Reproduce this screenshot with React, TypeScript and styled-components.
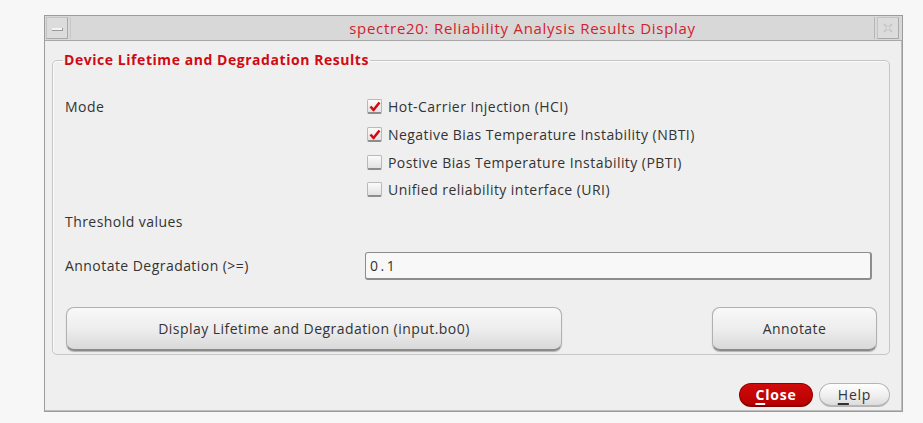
import React from "react";
import styled, { createGlobalStyle, css } from "styled-components";

const Global = createGlobalStyle`
  html, body { margin: 0; padding: 0; background: #f7f7f7; }
  body { font-family: "Open Sans", "DejaVu Sans", sans-serif; color: #333; }
  * { box-sizing: border-box; }
`;

const uiText = css`
  font-family: "Open Sans", "DejaVu Sans", sans-serif;
  font-size: 14px;
  letter-spacing: 0.45px;
  color: #333;
`;

const Page = styled.div`
  padding: 15px 0 0 44px;
  width: 923px;
  height: 423px;
`;

const Window = styled.div`
  width: 859px;
  height: 397px;
  border: 1px solid #9c9c9c;
  box-shadow: inset -1px -1px 0 #bdbdbd;
  background: #efefef;
  display: flex;
  flex-direction: column;
`;

const TitleBar = styled.div`
  height: 25px;
  display: flex;
  align-items: stretch;
  background: #d8d8d8;
  border-bottom: 1px solid #a8a8a8;
  padding: 1px 3px 1px 1px;
  gap: 2px;
`;

const TitleButton = styled.div`
  width: 22px;
  background: #dcdcdc;
  border: 1px solid #c4c4c4;
  border-right-color: #a9a9a9;
  border-bottom-color: #a9a9a9;
  display: flex;
  align-items: center;
  justify-content: center;
`;

const Dash = styled.div`
  width: 11px;
  height: 3px;
  margin-top: 2px;
  background: #f4f4f4;
  border-bottom: 1px solid #9a9a9a;
  border-right: 1px solid #9a9a9a;
`;

const TitleText = styled.div`
  flex: 1;
  text-align: center;
  font-size: 15px;
  letter-spacing: 0.72px;
  line-height: 22px;
  color: #d3212b;
  padding-left: 100px;
  border-left: 1px solid #c8c8c8;
  border-right: 1px solid #b8b8b8;
`;

const Body = styled.div`
  flex: 1;
  display: flex;
  flex-direction: column;
  padding: 10px 12px 4px 7px;
`;

const Group = styled.fieldset`
  margin: 0;
  padding: 24px 12px 3px 12px;
  border: 1px solid #c6c6c6;
  border-radius: 5px;
  box-shadow: inset 1px 1px 0 #fafafa;
  display: flex;
  flex-direction: column;
`;

const GroupTitle = styled.legend`
  padding: 0 1px;
  margin-left: -2px;
  font-size: 14px;
  letter-spacing: 0.55px;
  line-height: 18px;
  font-weight: 700;
  color: #d00a14;
`;

const FormRow = styled.div<{ $top?: number }>`
  display: grid;
  grid-template-columns: 300px 1fr;
  align-items: start;
  margin-top: ${(p) => p.$top ?? 0}px;
`;

const Label = styled.div`
  ${uiText};
  line-height: 28px;
`;

const CheckList = styled.div`
  display: flex;
  flex-direction: column;
`;

const CheckRow = styled.label`
  ${uiText};
  height: 27.7px;
  display: flex;
  align-items: center;
  gap: 6px;
  padding-left: 2px;
`;

const Box = styled.span`
  width: 15px;
  height: 15px;
  border: 1px solid #b9b9b9;
  border-bottom: 2px solid #8c8c8c;
  border-radius: 2px;
  background: linear-gradient(#fbfbfb, #e2e2e2);
  display: flex;
  align-items: center;
  justify-content: center;
`;

const Input = styled.div`
  ${uiText};
  height: 28px;
  margin-right: 5px;
  border: 1px solid #8d8d8d;
  border-right-width: 2px;
  border-bottom-width: 2px;
  border-radius: 3px;
  background: #f8f8f8;
  line-height: 25px;
  padding-left: 4px;
  letter-spacing: 2.5px;
`;

const ButtonRow = styled.div`
  display: flex;
  justify-content: space-between;
  margin-top: 27px;
  padding-left: 1px;
`;

const BigButton = styled.button<{ $w: number }>`
  ${uiText};
  width: ${(p) => p.$w}px;
  height: 44px;
  border: 1px solid #b0b0b0;
  border-bottom: 2px solid #8a8a8a;
  border-radius: 8px;
  background: linear-gradient(#f9f9f9 0%, #ececec 55%, #d9d9d9 100%);
  box-shadow: 0 1px 1px rgba(0, 0, 0, 0.25);
  padding: 0;
`;

const Footer = styled.div`
  margin-top: auto;
  display: flex;
  justify-content: flex-end;
  gap: 6px;
`;

const SmallButton = styled.button<{ $red?: boolean; $w: number }>`
  ${uiText};
  width: ${(p) => p.$w}px;
  height: 24px;
  border-radius: 12px;
  padding: 0;
  letter-spacing: 0.8px;
  font-weight: ${(p) => (p.$red ? 700 : 400)};
  color: ${(p) => (p.$red ? "#fff" : "#333")};
  border: 1px solid ${(p) => (p.$red ? "#8e0000" : "#b5b5b5")};
  border-bottom-width: 2px;
  background: ${(p) =>
    p.$red
      ? "linear-gradient(#d10a0a, #b80000)"
      : "linear-gradient(#ffffff, #ededed 60%, #dcdcdc)"};
  & u { text-decoration-thickness: 2px; text-underline-offset: 3px; }
`;

const Check = () => (
  <svg width="12" height="11" viewBox="0 0 12 11">
    <path d="M1.5 5.5 L4.5 9 L10.5 1.5" fill="none" stroke="#d40a12" strokeWidth="2.6" strokeLinejoin="round" />
  </svg>
);

const items: [string, boolean][] = [
  ["Hot-Carrier Injection (HCI)", true],
  ["Negative Bias Temperature Instability (NBTI)", true],
  ["Postive Bias Temperature Instability (PBTI)", false],
  ["Unified reliability interface (URI)", false],
];

export default function App() {
  return (
    <Page>
      <Global />
      <Window>
        <TitleBar>
          <TitleButton>
            <Dash />
          </TitleButton>
          <TitleText>spectre20: Reliability Analysis Results Display</TitleText>
          <TitleButton>
            <svg width="12" height="12" viewBox="0 0 12 12">
              <path d="M2 2 L5 5 M10 2 L7 5 M2 10 L5 7 M10 10 L7 7" stroke="#c8c8c8" strokeWidth="2" fill="none" />
            </svg>
          </TitleButton>
        </TitleBar>
        <Body>
          <Group>
            <GroupTitle>Device Lifetime and Degradation Results</GroupTitle>
            <FormRow>
              <Label>Mode</Label>
              <CheckList>
                {items.map(([t, c]) => (
                  <CheckRow key={t}>
                    <Box>{c && <Check />}</Box>
                    {t}
                  </CheckRow>
                ))}
              </CheckList>
            </FormRow>
            <FormRow $top={4}>
              <Label>Threshold values</Label>
            </FormRow>
            <FormRow $top={16}>
              <Label>Annotate Degradation (&gt;=)</Label>
              <Input>0.1</Input>
            </FormRow>
            <ButtonRow>
              <BigButton $w={496}>Display Lifetime and Degradation (input.bo0)</BigButton>
              <BigButton $w={165}>Annotate</BigButton>
            </ButtonRow>
          </Group>
          <Footer>
            <SmallButton $red $w={74}>
              <u>C</u>lose
            </SmallButton>
            <SmallButton $w={71}>
              <u>H</u>elp
            </SmallButton>
          </Footer>
        </Body>
      </Window>
    </Page>
  );
}
